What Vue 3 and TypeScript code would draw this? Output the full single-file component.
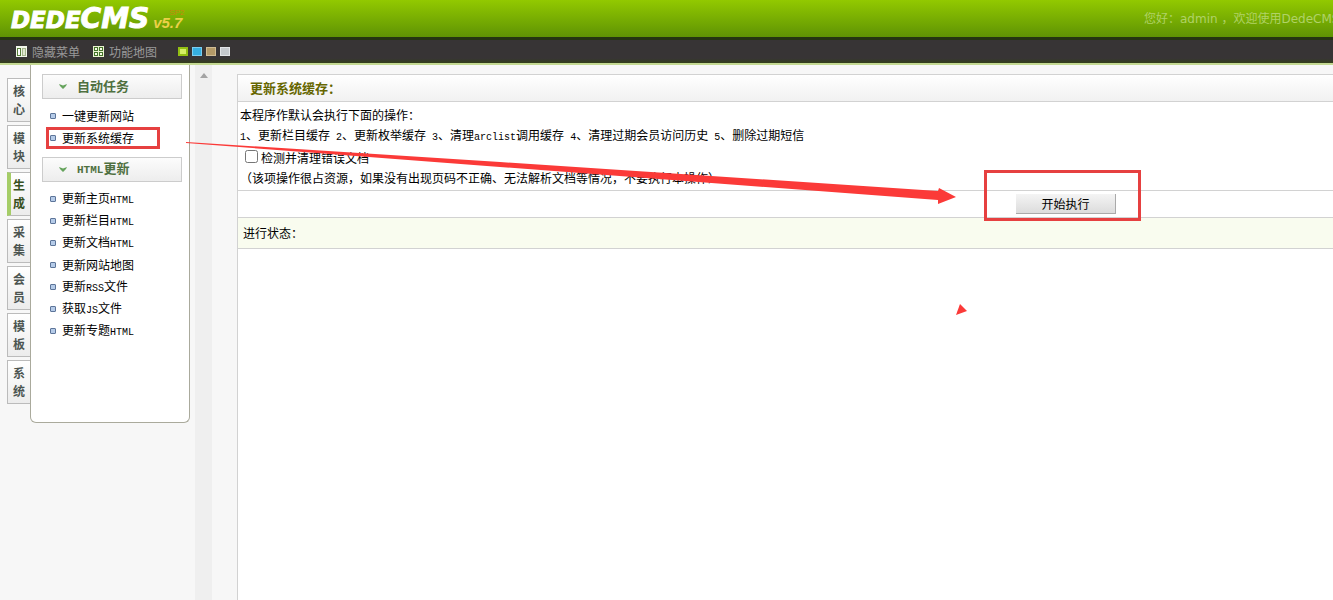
<script setup lang="ts">
import { ref } from 'vue'

interface MenuGroup {
  title: string
  items: string[]
}

const tabs: string[] = ['核心', '模块', '生成', '采集', '会员', '模板', '系统']
const activeTab = ref('生成')
const checkErrors = ref(false)
const skins: string[] = ['green', 'blue', 'brown', 'gray']

const groups: MenuGroup[] = [
  { title: '自动任务', items: ['一键更新网站', '更新系统缓存'] },
  {
    title: 'HTML更新',
    items: ['更新主页HTML', '更新栏目HTML', '更新文档HTML', '更新网站地图', '更新RSS文件', '获取JS文件', '更新专题HTML'],
  },
]
const marked = '更新系统缓存'
const steps = '1、更新栏目缓存 2、更新枚举缓存 3、清理arclist调用缓存 4、清理过期会员访问历史 5、删除过期短信'

// Splits a label into runs so that Latin letters take half the width of a Han character.
function runs(text: string): { text: string; latin: boolean }[] {
  return (text.match(/[\x20-\x7e]+|[^\x20-\x7e]+/g) ?? []).map((t) => ({ text: t, latin: /^[\x20-\x7e]/.test(t) }))
}
</script>

<template>
  <div class="page">
    <header class="top">
      <div class="logo"><span class="dede">DEDE</span><span class="cms">CMS</span><span class="version">v5.7<small>SP2</small></span></div>
      <p class="welcome">您好：admin ，欢迎使用DedeCMS</p>
    </header>
    <nav class="bar">
      <a href="#">
        <svg width="11" height="11" viewBox="0 0 11 11">
          <rect width="11" height="11" fill="#f2f6ea" />
          <rect x="1.5" y="2.5" width="3" height="7" fill="#fff" stroke="#58803a" />
          <rect x="6.5" y="2.5" width="3" height="7" fill="#dfe8cf" stroke="#a5b58c" />
        </svg>隐藏菜单</a>
      <a href="#">
        <svg width="11" height="11" viewBox="0 0 11 11">
          <rect width="11" height="11" fill="#e7f2cf" />
          <g fill="#f7fbe9" stroke="#44732a">
            <rect x="1.5" y="1.5" width="3" height="3" /><rect x="6.5" y="1.5" width="3" height="3" />
            <rect x="1.5" y="6.5" width="3" height="3" /><rect x="6.5" y="6.5" width="3" height="3" />
          </g>
        </svg>功能地图</a>
      <div class="skins">
        <button v-for="s in skins" :key="s" type="button" :class="['skin', s]" :aria-label="s"></button>
      </div>
    </nav>
    <div class="body">
      <div class="tabs">
        <button v-for="t in tabs" :key="t" type="button" :class="['tab', { active: t === activeTab }]" @click="activeTab = t">{{ t }}</button>
      </div>
      <aside class="menu">
        <section v-for="g in groups" :key="g.title">
          <h2>
            <svg width="8" height="5" viewBox="0 0 8 5"><path d="M0 0 L4 1.5 L8 0 L7 2 L4 5 L1 2 Z" fill="#65a35c" /></svg>
            <span><span v-for="(r, i) in runs(g.title)" :key="i" :class="{ latin: r.latin }">{{ r.text }}</span></span>
          </h2>
          <ul>
            <li v-for="item in g.items" :key="item" :class="{ marked: item === marked }">
              <a href="#"><i></i><span><span v-for="(r, i) in runs(item)" :key="i" :class="{ latin: r.latin }">{{ r.text }}</span></span></a>
            </li>
          </ul>
        </section>
      </aside>
      <div class="scroll">
        <svg width="8" height="5" viewBox="0 0 8 5"><path d="M4 0 L8 5 H0 Z" fill="#a3a3a3" /></svg>
      </div>
      <main>
        <h1>更新系统缓存：</h1>
        <form @submit.prevent>
          <div class="info">
            <p>本程序作默认会执行下面的操作：</p>
            <p><span v-for="(r, i) in runs(steps)" :key="i" :class="{ latin: r.latin }">{{ r.text }}</span></p>
            <p class="check"><input id="check-errors" v-model="checkErrors" type="checkbox" /><label for="check-errors">检测并清理错误文档</label></p>
            <p>（该项操作很占资源，如果没有出现页码不正确、无法解析文档等情况，不要执行本操作）</p>
          </div>
          <div class="action"><button type="submit">开始执行</button></div>
        </form>
        <div class="status">进行状态：</div>
      </main>
    </div>
    <svg class="notes" width="1333" height="600" viewBox="0 0 1333 600">
      <path d="M186 142 L500 162 L938 191 L939 188 L956 197 L938 204 L938 200 L500 167 L186 143 Z" fill="#fb3a38" />
      <path d="M960 304 L967 311 L956 315 Z" fill="#fb3a38" />
      <path d="M984 170 H1141 V221 H984 Z M987 173 V218 H1138 V173 Z" fill="#e64040" fill-rule="evenodd" />
    </svg>
  </div>
</template>

<style>
body {
  margin: 0;
  background: #f7f7f7;
}
</style>

<style scoped>
.page {
  position: relative;
  display: flex;
  flex-direction: column;
  min-height: 100vh;
  overflow: hidden;
  font: 12px/20px "Noto Sans CJK SC", sans-serif;
  color: #000;
}
.page * {
  box-sizing: border-box;
}
p, h1, h2, ul {
  margin: 0;
  padding: 0;
}
ul {
  list-style: none;
}
a {
  color: inherit;
  text-decoration: none;
}
button {
  padding: 0;
  font: inherit;
  color: inherit;
  cursor: pointer;
}
.latin {
  font-family: "Liberation Mono", monospace;
  font-size: 10px;
  white-space: pre;
}
h2 .latin {
  font-size: 11px;
}
.top {
  display: flex;
  justify-content: space-between;
  height: 37px;
  background: linear-gradient(#92c900, #5f9304);
}
.logo {
  display: flex;
  align-items: baseline;
  padding-left: 11px;
  color: #fff;
  font: italic bold 23px/38px "DejaVu Sans", sans-serif;
}
.dede, .cms {
  -webkit-text-stroke: 1px #fff;
}
.cms {
  font-size: 28px;
}
.version {
  position: relative;
  margin-left: 4px;
  color: #ecd048;
  font: italic bold 15px/38px "Liberation Sans", sans-serif;
}
.version small {
  position: absolute;
  top: 5px;
  right: -2px;
  color: #c58a10;
  font: 8px/8px "Liberation Sans", sans-serif;
}
.welcome {
  width: 189px;
  overflow: hidden;
  color: #b0d267;
  font: 12px/38px "DejaVu Sans", "Noto Sans CJK SC", sans-serif;
  white-space: nowrap;
}
.bar {
  display: flex;
  align-items: center;
  gap: 13px;
  height: 28px;
  padding-left: 16px;
  border-top: 3px solid #253512;
  border-bottom: 2px solid #c4d992;
  background: linear-gradient(#373435 80%, #343f1c);
  color: #999;
}
.bar a {
  display: flex;
  align-items: center;
  gap: 5px;
}
.skins {
  display: flex;
  gap: 4px;
  padding-left: 8px;
}
.skin {
  width: 10px;
  height: 9px;
  border: 1px solid #eee;
}
.green { background: #d5ee66; border: 2px solid #93bf13; }
.blue { background: #35aee0; border-color: #7bcdf0; }
.brown { background: #b49a68; border-color: #d0bc94; }
.gray { background: #c5c9cd; border-color: #e2e4e7; }
.body {
  display: flex;
  flex: 1;
}
.tabs {
  display: flex;
  flex-direction: column;
  gap: 3px;
  width: 30px;
  padding: 13px 0 0 7px;
}
.tab {
  height: 44px;
  padding: 3px 5px;
  border: 1px solid #bbb;
  border-right: 0;
  background: linear-gradient(#fff, #ececec);
  color: #4c5551;
  font: bold 12px/18px "Noto Sans CJK SC", sans-serif;
}
.tab.active {
  padding-left: 2px;
  border-left: 4px solid #a5cd67;
  color: #375020;
}
.menu {
  align-self: flex-start;
  width: 160px;
  height: 358px;
  padding: 9px 7px 0 11px;
  border: 1px solid #aaaa9c;
  border-top: 0;
  border-radius: 0 0 6px 6px;
  background: #fff;
}
.menu h2 {
  display: flex;
  align-items: center;
  gap: 10px;
  height: 25px;
  padding: 0 0 1px 16px;
  border: 1px solid #ccc;
  background: linear-gradient(#fcfcfc, #ededed);
  color: #4f7040;
  font: bold 13px/20px "Noto Sans CJK SC", sans-serif;
}
.menu ul {
  padding: 6px 0 8px 4px;
}
.menu li {
  width: 114px;
  height: 22px;
  padding: 0 4px;
}
.menu li.marked {
  padding: 0 1px;
  border: 3px solid #e64040;
}
.menu li a {
  display: flex;
  align-items: center;
  gap: 6px;
  height: 100%;
  white-space: nowrap;
}
.menu i {
  width: 6px;
  height: 6px;
  border: 1px solid #5d7599;
  border-radius: 1px;
  background: #b5cbe8;
}
.scroll {
  width: 17px;
  margin: 0 25px 0 5px;
  padding-top: 5px;
  background: #efefef;
  line-height: 5px;
  text-align: center;
}
main {
  flex: 1;
  min-width: 0;
  margin-top: 9px;
  border-left: 1px solid #d2d2d2;
  background: #fff;
}
h1 {
  height: 28px;
  padding-left: 12px;
  border-top: 1px solid #d2d2d2;
  border-bottom: 1px solid #d2d2d2;
  background: linear-gradient(#fff, #f1f1f1);
  color: #666600;
  font: bold 13px/26px "Noto Sans CJK SC", sans-serif;
}
.info {
  height: 89px;
  padding: 3px 2px 0;
  border-bottom: 1px solid #d2d2d2;
  white-space: nowrap;
}
.check {
  display: flex;
  align-items: center;
  gap: 3px;
  padding-left: 5px;
}
.check input {
  width: 13px;
  height: 13px;
  margin: 0 0 4px;
}
.action {
  height: 27px;
  padding: 3px 0 0 778px;
  border-bottom: 1px solid #d2d2d2;
}
.action button {
  display: block;
  width: 100px;
  height: 20px;
  border: 0;
  border-right: 1px solid #aaa;
  border-bottom: 1px solid #aaa;
  background: linear-gradient(#f4f4f4, #dcdcdc);
  line-height: 18px;
}
.status {
  height: 31px;
  padding-left: 5px;
  border-bottom: 1px solid #d2d2d2;
  background: #f9fcef;
  line-height: 30px;
}
.notes {
  position: absolute;
  top: 0;
  left: 0;
  pointer-events: none;
}
</style>
